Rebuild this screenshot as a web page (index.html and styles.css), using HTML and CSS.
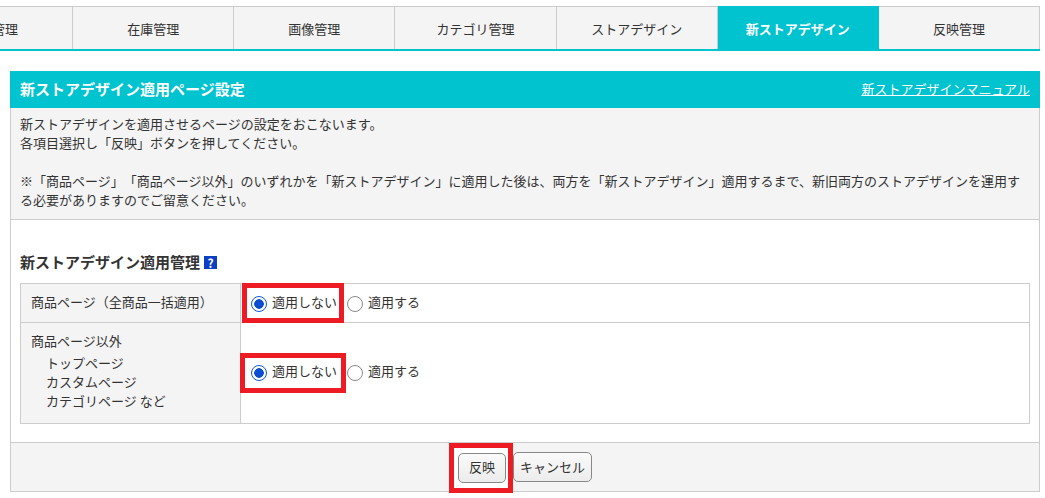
FILE: index.html
```html
<!DOCTYPE html>
<html lang="ja">
<head>
<meta charset="utf-8">
<title>新ストアデザイン適用ページ設定</title>
<link rel="stylesheet" href="styles.css">
</head>
<body>
<nav class="tabs">
  <a class="tab">商品管理</a>
  <a class="tab">在庫管理</a>
  <a class="tab">画像管理</a>
  <a class="tab">カテゴリ管理</a>
  <a class="tab">ストアデザイン</a>
  <a class="tab active">新ストアデザイン</a>
  <a class="tab">反映管理</a>
</nav>
<main class="panel">
  <header class="panel-head">
    <h1>新ストアデザイン適用ページ設定</h1>
    <a class="manual">新ストアデザインマニュアル</a>
  </header>
  <section class="intro">
    <p>新ストアデザインを適用させるページの設定をおこないます。<br>各項目選択し「反映」ボタンを押してください。</p>
    <p>※「商品ページ」「商品ページ以外」のいずれかを「新ストアデザイン」に適用した後は、両方を「新ストアデザイン」適用するまで、新旧両方のストアデザインを運用する必要がありますのでご留意ください。</p>
  </section>
  <section class="content">
    <h2>新ストアデザイン適用管理<span class="help">?</span></h2>
    <div class="settings">
      <div class="label first">商品ページ（全商品一括適用）</div>
      <div class="value first">
        <span class="mark narrow"><label class="radio"><span class="dot on"></span>適用しない</label></span>
        <label class="radio"><span class="dot"></span>適用する</label>
      </div>
      <div class="label">
        <div class="lead">商品ページ以外</div>
        <div class="sub">トップページ<br>カスタムページ<br>カテゴリページ など</div>
      </div>
      <div class="value second">
        <span class="mark wide"><label class="radio"><span class="dot on"></span>適用しない</label></span>
        <label class="radio"><span class="dot"></span>適用する</label>
      </div>
    </div>
  </section>
  <footer class="actions">
    <span class="mark-btn"><button class="btn">反映</button></span>
    <button class="btn cancel">キャンセル</button>
  </footer>
</main>
</body>
</html>
```
FILE: styles.css
```css
* { box-sizing: border-box; }
html, body { margin: 0; padding: 0; }
body {
  width: 1045px;
  height: 498px;
  overflow: hidden;
  background: #fff;
  color: #333;
  font-family: "Noto Sans CJK JP", "Noto Sans", sans-serif;
  font-size: 13px;
  line-height: 19px;
  text-spacing-trim: space-all;
}
.tabs {
  display: flex;
  height: 45px;
  margin: 6px 5px 0 -88px;
  border-bottom: 2px solid #00c3d0;
}
.tab {
  flex: 1 1 0;
  display: flex;
  align-items: center;
  justify-content: center;
  background: #f4f4f4;
  border-top: 1px solid #ccc;
  border-right: 1px solid #ccc;
}
.tab.active {
  background: #00c3d0;
  border-color: #00c3d0;
  color: #fff;
  font-weight: 700;
}
.panel {
  margin: 20px 5px 0 10px;
  height: 421px;
  border: 1px solid #ccc;
  border-top: 0;
  display: flex;
  flex-direction: column;
}
.panel-head {
  display: flex;
  justify-content: space-between;
  align-items: center;
  height: 37px;
  margin: 0 -1px;
  padding: 0 10px 2px;
  background: #00c3d0;
  color: #fff;
}
.panel-head h1 { margin: 0; font-size: 15px; font-weight: 700; }
.manual { text-decoration: underline; }
.intro {
  height: 112px;
  padding: 6px 9px 0;
  background: #f4f4f4;
  border-bottom: 1px solid #ccc;
}
.intro p { margin: 0 0 19px; }
.content { flex: 1; padding: 0 9px; }
.content h2 {
  margin: 24px 0 0;
  height: 39px;
  font-size: 15px;
  font-weight: 700;
  display: flex;
  align-items: flex-start;
  line-height: 36px;
}
.help {
  width: 13px;
  height: 13px;
  margin: 12px 0 0 4px;
  background: #0b3fc4;
  color: #fff;
  font-size: 12px;
  line-height: 13px;
  text-align: center;
}
.settings {
  display: grid;
  grid-template-columns: 220px 1fr;
  grid-template-rows: 39px 100px;
  border: 1px solid #ccc;
}
.label {
  background: #f4f4f4;
  border-right: 1px solid #ccc;
  padding: 8px 10px;
}
.first { border-bottom: 1px solid #ccc; }
.label.first { display: flex; align-items: center; padding: 0 10px 3px; }
.lead { margin-bottom: 3px; }
.sub { padding-left: 15px; line-height: 19px; }
.value {
  display: flex;
  align-items: center;
  padding-left: 1px;
}
.value.second { padding-bottom: 2px; }
.radio {
  display: inline-flex;
  align-items: center;
  gap: 5px;
  padding-bottom: 4px;
}
.dot {
  width: 16px;
  height: 16px;
  margin-top: 6px;
  border: 1px solid #8a8a8a;
  border-radius: 50%;
  background: #fff;
}
.dot.on {
  border-color: #1057d8;
  background: radial-gradient(circle, #0b4fd0 0 4.5px, #fff 5px);
}
.mark {
  display: inline-flex;
  align-items: center;
  height: 40px;
  border: 5px solid #ed1c24;
  margin-right: 3px;
}
.mark.narrow { width: 102px; padding-left: 4px; }
.mark.wide {
  width: 106px;
  margin: 2px 1px 0 -2px;
  padding: 0 0 2px 6px;
}
.actions {
  height: 49px;
  display: flex;
  align-items: center;
  justify-content: center;
  background: #f4f4f4;
  border-top: 1px solid #ccc;
  padding-right: 9px;
}
.mark-btn {
  display: inline-flex;
  align-items: center;
  justify-content: center;
  width: 64px;
  height: 50px;
  margin-top: 1px;
  background: #fff;
  border: 5px solid #ed1c24;
}
.btn {
  height: 30px;
  padding: 0 0 2px;
  font: inherit;
  color: #333;
  border: 1px solid #888;
  border-radius: 5px;
  background: linear-gradient(#fafafa, #ececec);
}
.mark-btn .btn { width: 48px; margin: 0 0 0 2px; }
.btn.cancel { width: 79px; }
```
